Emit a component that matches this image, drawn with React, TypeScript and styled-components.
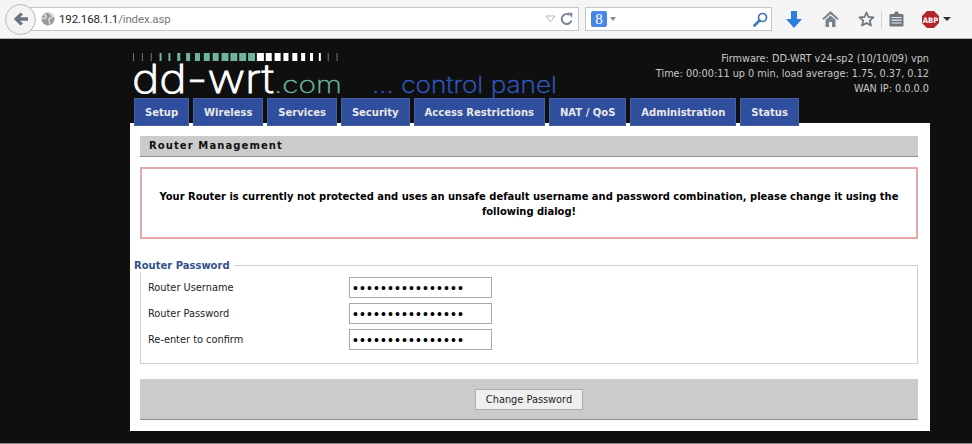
import React from "react";
import styled, { createGlobalStyle } from "styled-components";

const GlobalStyle = createGlobalStyle`
  html, body {
    margin: 0;
    padding: 0;
    background: #0f0f0f;
  }
  body {
    width: 972px;
    height: 444px;
    overflow: hidden;
    font-family: "DejaVu Sans Condensed", "DejaVu Sans", sans-serif;
  }
`;

const Toolbar = styled.div`
  height: 39px;
  box-sizing: border-box;
  background: #f5f5f5;
  border-bottom: 1px solid #b4b4b4;
  display: flex;
  align-items: center;
  padding-left: 5px;
`;

const BackButton = styled.div`
  width: 31px;
  height: 31px;
  box-sizing: border-box;
  border-radius: 50%;
  background: #f3f3f3;
  border: 1px solid #b9b9b9;
  display: flex;
  align-items: center;
  justify-content: center;
  flex-shrink: 0;
  z-index: 1;
`;

const UrlBar = styled.div`
  width: 549px;
  height: 24px;
  margin-left: -6px;
  padding: 0 4px 0 10px;
  box-sizing: border-box;
  background: #fff;
  border: 1px solid #c6c6c6;
  display: flex;
  align-items: center;
  font-family: "Roboto", sans-serif;
  font-size: 11.5px;
  letter-spacing: -0.15px;
`;

const Host = styled.span`
  color: #1c1c1c;
  margin-left: 4px;
`;

const UrlPath = styled.span`
  color: #777;
  flex: 1;
`;

const SearchBar = styled.div`
  width: 187px;
  height: 24px;
  margin-left: 6px;
  padding: 0 3px 0 5px;
  box-sizing: border-box;
  background: #fff;
  border: 1px solid #c6c6c6;
  display: flex;
  align-items: center;
  justify-content: space-between;
`;

const GoogleBadge = styled.div`
  display: flex;
  align-items: center;
  gap: 3px;
`;

const GoogleMark = styled.span`
  width: 16px;
  height: 16px;
  border-radius: 2px;
  background: #4a86e8;
  color: #fff;
  font-family: "Liberation Serif", serif;
  font-size: 15px;
  line-height: 16px;
  text-align: center;
`;

const ToolIcons = styled.div`
  display: flex;
  align-items: center;
  margin-left: 13px;
`;

const ToolSlot = styled.div<{ $w: number }>`
  width: ${(p) => p.$w}px;
  display: flex;
  justify-content: center;
  align-items: center;
`;

const Divider = styled.div`
  width: 1px;
  height: 17px;
  background: #d2d2d2;
`;

const Page = styled.div`
  width: 800px;
  margin-left: 130px;
  padding-bottom: 12px;
`;

const Header = styled.div`
  height: 59px;
  box-sizing: border-box;
  padding-top: 14px;
  display: flex;
  justify-content: space-between;
`;

const Logo = styled.svg`
  display: block;
  overflow: visible;
`;

const Status = styled.div`
  padding-right: 1px;
  margin-top: -2px;
  color: #c8c8c8;
  font-size: 10.8px;
  line-height: 15px;
  text-align: right;
`;

const Tabs = styled.div`
  display: flex;
  gap: 4px;
  padding-left: 4px;
  position: relative;
  z-index: 1;
`;

const Tab = styled.div`
  height: 28px;
  padding: 0 10px;
  box-sizing: border-box;
  background: #2f4f9e;
  border: 1px solid #46619f;
  color: #e8e8e8;
  font-family: "DejaVu Sans", sans-serif;
  font-size: 10px;
  font-weight: bold;
  line-height: 27px;
`;

const Panel = styled.div`
  margin-top: -3px;
  height: 308px;
  box-sizing: border-box;
  padding: 13px 12px 0 10px;
  background: #fff;
`;

const SectionTitle = styled.h2`
  margin: 0;
  height: 21px;
  box-sizing: border-box;
  padding-left: 9px;
  background: #cbcbcb;
  border-bottom: 1px solid #8f8f8f;
  color: #111;
  font-family: "DejaVu Sans", sans-serif;
  font-size: 10px;
  font-weight: bold;
  letter-spacing: 1.1px;
  line-height: 20px;
`;

const Warning = styled.div`
  margin-top: 10px;
  height: 72px;
  box-sizing: border-box;
  padding: 2px 12px 0;
  border: 2px solid #e3a9ab;
  color: #000;
  font-size: 11.05px;
  font-weight: bold;
  line-height: 15px;
  text-align: center;
  display: flex;
  align-items: center;
`;

const FieldGroup = styled.fieldset`
  margin: 20px 0 0;
  padding: 5px 0 0 7px;
  height: 105px;
  box-sizing: border-box;
  border: 1px solid #cfcfcf;
  min-width: 0;
`;

const GroupLegend = styled.legend`
  margin-left: -14px;
  padding: 0 4px 0 0;
  color: #34508a;
  font-family: "DejaVu Sans", sans-serif;
  font-size: 10px;
  font-weight: bold;
  line-height: 13px;
`;

const Row = styled.div`
  display: flex;
  align-items: center;
  height: 21px;
  margin-bottom: 5px;
`;

const RowLabel = styled.label`
  width: 201px;
  color: #222;
  font-size: 10.9px;
`;

const SecretInput = styled.input`
  width: 143px;
  height: 21px;
  box-sizing: border-box;
  padding: 0 3px;
  border: 1px solid #a9a9a9;
  background: #fff;
  color: #000;
  font-size: 14px;
  letter-spacing: 2.1px;
  outline: none;
`;

const ActionBar = styled.div`
  margin-top: 15px;
  height: 41px;
  box-sizing: border-box;
  background: #cbcbcb;
  border-bottom: 1px solid #8f8f8f;
  display: flex;
  justify-content: center;
  align-items: center;
`;

const ActionButton = styled.button`
  width: 108px;
  height: 21px;
  padding: 0;
  background: #efefef;
  border: 1px solid #acacac;
  color: #222;
  font-family: inherit;
  font-size: 10.9px;
`;

const BottomEdge = styled.div`
  height: 1px;
  background: #8a8a8a;
`;

const tabs = [
  "Setup",
  "Wireless",
  "Services",
  "Security",
  "Access Restrictions",
  "NAT / QoS",
  "Administration",
  "Status",
];

const fields = ["Router Username", "Router Password", "Re-enter to confirm"];

const barWidths = [1, 1, 1, 2, 2, 3, 4, 5, 6, 6, 7, 7, 7, 7, 7, 6, 6, 5, 5, 4, 3, 2, 1, 1];

const barColor = (i: number) => {
  if (i < 3 || i > 21) return "#777";
  return i < 14 ? "#6db59f" : "#fff";
};

const WordMark = () => (
  <Logo width="430" height="45" viewBox="0 0 430 45">
    {barWidths.map((w, i) => (
      <rect key={i} x={3 + i * 8.85} y={0} width={w} height={8} fill={barColor(i)} />
    ))}
    <g fontFamily="Inter,'Lato',sans-serif">
      <text x="2" y="40" fontSize="40" fontWeight="200" fill="#fff" stroke="#fff" strokeWidth="0.9" textLength="142" lengthAdjust="spacingAndGlyphs">
        dd-wrt
      </text>
      <text x="144" y="40" fontSize="23" fontWeight="200" fill="#6db59f" stroke="#6db59f" strokeWidth="0.3" textLength="68" lengthAdjust="spacingAndGlyphs">
        .com
      </text>
      <text x="242" y="40" fontSize="23" fontWeight="200" fill="#2f5ac0" stroke="#2f5ac0" strokeWidth="0.4" textLength="185" lengthAdjust="spacingAndGlyphs">
        ... control panel
      </text>
    </g>
  </Logo>
);

const App: React.FC = () => {
  return (
    <>
      <GlobalStyle />
      <Toolbar>
        <BackButton>
          <svg width="16" height="14" viewBox="0 0 16 14">
            <path d="M7.5 0.5 L0.8 7 L7.5 13.5 L10 11.5 L7 8.8 H15 V5.2 H7 L10 2.5 Z" fill="#6a7480" />
          </svg>
        </BackButton>
        <UrlBar>
          <svg width="14" height="14" viewBox="0 0 14 14">
            <circle cx="7" cy="7" r="6.5" fill="#9a9a9a" />
            <path d="M3 2.5 C5 3 6 4.5 4.5 6 C3.5 7 2 6.5 1 6 M8 1 C9 3 11 3 12.5 4 C11 6 9 5.5 8 7 C7.5 9 9.5 10 8.5 12.5" stroke="#dcdcdc" strokeWidth="1.5" fill="none" />
          </svg>
          <Host>192.168.1.1</Host>
          <UrlPath>/index.asp</UrlPath>
          <svg width="11" height="8" viewBox="0 0 11 8" style={{ marginRight: 4 }}>
            <path d="M1 1 H10 L5.5 7 Z" fill="#fff" stroke="#b5b5b5" />
          </svg>
          <svg width="14" height="14" viewBox="0 0 14 14">
            <path d="M11.5 8.5 A5 5 0 1 1 9.5 2.8" fill="none" stroke="#7d8791" strokeWidth="2" />
            <path d="M8 0.5 L12.5 1 L12 5.8 Z" fill="#7d8791" />
          </svg>
        </UrlBar>
        <SearchBar>
          <GoogleBadge>
            <GoogleMark>8</GoogleMark>
            <svg width="6" height="4" viewBox="0 0 6 4">
              <path d="M0 0 H6 L3 4 Z" fill="#888" />
            </svg>
          </GoogleBadge>
          <svg width="15" height="15" viewBox="0 0 15 15">
            <circle cx="9.5" cy="5.5" r="4" fill="none" stroke="#3f74ad" strokeWidth="1.7" />
            <path d="M6.5 8.5 L1.5 13.5" stroke="#3f74ad" strokeWidth="2.6" strokeLinecap="round" />
          </svg>
        </SearchBar>
        <ToolIcons>
          <ToolSlot $w={18}>
            <svg width="16" height="17" viewBox="0 0 16 17">
              <path d="M5 0 H11 V8 H16 L8 17 L0 8 H5 Z" fill="#2a7fe0" />
            </svg>
          </ToolSlot>
          <ToolSlot $w={54}>
            <svg width="17" height="16" viewBox="0 0 17 16">
              <path d="M8.5 0 L17 8 L15 8.8 L8.5 3 L2 8.8 L0 8 Z M3.5 9 L8.5 4.5 L13.5 9 V16 H10 V11 H7 V16 H3.5 Z" fill="#7b838a" />
            </svg>
          </ToolSlot>
          <ToolSlot $w={18}>
            <svg width="17" height="16" viewBox="0 0 17 16">
              <path d="M8.5 1.5 L10.5 6 L15.5 6.4 L11.7 9.6 L13 14.6 L8.5 11.9 L4 14.6 L5.3 9.6 L1.5 6.4 L6.5 6 Z" fill="none" stroke="#70787f" strokeWidth="1.8" strokeLinejoin="round" />
            </svg>
          </ToolSlot>
          <ToolSlot $w={12}>
            <Divider />
          </ToolSlot>
          <ToolSlot $w={18}>
            <svg width="15" height="16" viewBox="0 0 15 16">
              <path d="M5 2 H6 V0.5 H9 V2 H10 V3 H13.5 Q14.5 3 14.5 4 V14.5 Q14.5 15.5 13.5 15.5 H1.5 Q0.5 15.5 0.5 14.5 V4 Q0.5 3 1.5 3 H5 Z" fill="#70787f" />
              <path d="M2.5 6.5 H12.5 M2.5 9.2 H12.5 M2.5 12 H12.5" stroke="#e8e8e8" strokeWidth="1.2" />
            </svg>
          </ToolSlot>
          <ToolSlot $w={66}>
            <svg width="32" height="17" viewBox="0 0 32 17">
              <path d="M5 0 H12 L17 5 V12 L12 17 H5 L0 12 V5 Z" fill="#b3262b" />
              <text x="8.5" y="11.5" fontSize="7.5" fontWeight="bold" fill="#fff" textAnchor="middle" fontFamily="'DejaVu Sans Condensed',sans-serif">
                ABP
              </text>
              <path d="M21 6 H29 L25 10 Z" fill="#333" />
            </svg>
          </ToolSlot>
        </ToolIcons>
      </Toolbar>
      <Page>
        <Header>
          <WordMark />
          <Status>
            Firmware: DD-WRT v24-sp2 (10/10/09) vpn
            <br />
            Time: 00:00:11 up 0 min, load average: 1.75, 0.37, 0.12
            <br />
            WAN IP: 0.0.0.0
          </Status>
        </Header>
        <Tabs>
          {tabs.map((t) => (
            <Tab key={t}>{t}</Tab>
          ))}
        </Tabs>
        <Panel>
          <SectionTitle>Router Management</SectionTitle>
          <Warning>
            Your Router is currently not protected and uses an unsafe default username and password combination, please change it using the following dialog!
          </Warning>
          <FieldGroup>
            <GroupLegend>Router Password</GroupLegend>
            {fields.map((f) => (
              <Row key={f}>
                <RowLabel>{f}</RowLabel>
                <SecretInput type="password" value="xxxxxxxxxxxxxxxx" readOnly />
              </Row>
            ))}
          </FieldGroup>
          <ActionBar>
            <ActionButton>Change Password</ActionButton>
          </ActionBar>
        </Panel>
      </Page>
      <BottomEdge />
    </>
  );
};

export default App;
